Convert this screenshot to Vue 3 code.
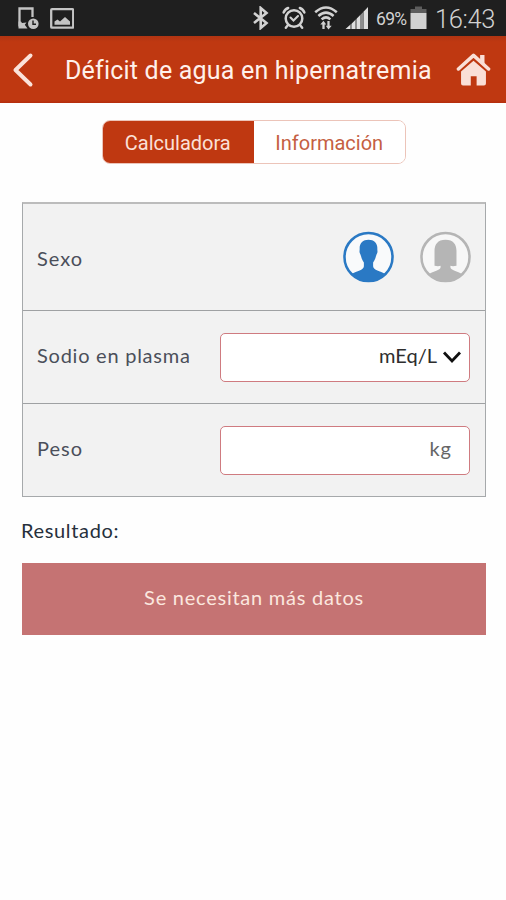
<script setup>
import { ref } from 'vue'

const tab = ref('calc')
const sex = ref('m')
</script>

<template>
  <div class="screen">
    <div class="status">
      <svg class="s-device" viewBox="0 0 22 23" width="22" height="23">
        <path d="M2.500 20.500V2.500H15.500V11" fill="none" stroke="#c4c4c4" stroke-width="2.300" />
        <path d="M1.500 15.500H4L5 17L9.500 16.500L7.800 18.800L10.500 22.500H1.500Z" fill="#c4c4c4" />
        <circle cx="16.300" cy="17.700" r="5.300" fill="#c4c4c4" />
        <path d="M16 14.500V18.200H19" fill="none" stroke="#1f1f1f" stroke-width="1.400" />
      </svg>
      <svg class="s-image" viewBox="0 0 24 21" width="24" height="21">
        <rect x="1.200" y="1.200" width="22" height="18.500" rx="0.800" fill="none" stroke="#c4c4c4" stroke-width="2.300" />
        <path d="M4.500 16.700V13.500L7.500 11.500L10 13.500L15 9L20 13.500V16.700Z" fill="#c4c4c4" />
      </svg>
      <svg class="s-bt" viewBox="0 0 18 24" width="18" height="24">
        <path d="M2 7L14.500 17L8.700 22V2L14.500 7L2 17" fill="none" stroke="#d2d2d2" stroke-width="2.600" />
      </svg>
      <svg class="s-alarm" viewBox="0 0 24 24" width="24" height="24">
        <g fill="none" stroke="#d2d2d2" stroke-linecap="round">
          <circle cx="12" cy="12.500" r="8.300" stroke-width="2.500" />
          <path d="M8.500 11.500L11.500 14.500L16 10" stroke-width="2.100" />
          <path d="M1.600 6.500Q2.800 3.200 6.200 2M22.400 6.500Q21.200 3.200 17.800 2M6 19L3.800 21.800M18 19L20.200 21.800" stroke-width="2.400" />
        </g>
      </svg>
      <svg class="s-wifi" viewBox="0 0 24 25" width="24" height="25">
        <g fill="none" stroke="#d2d2d2" stroke-width="2.500">
          <path d="M1.200 7.300Q12 -2.300 22.800 7.300M4.400 11Q12 4.200 19.600 11M7.600 14.400Q12 10.400 16.400 14.400" />
          <path d="M9.500 24V18M14.500 16V22" stroke-width="2.300" />
        </g>
        <path d="M6.300 19.500L9.500 15.700L12.200 19.500ZM11.800 20.700L14.500 24.500L17.700 20.700Z" fill="#d2d2d2" />
      </svg>
      <svg class="s-signal" viewBox="0 0 24 24" width="24" height="24">
        <path d="M0.500 23L5.500 18.500V23ZM7 17.200L10 14.300V23H7ZM12 12.300L15 9.300V23H12ZM18.500 5.700L23 1V23H18.500Z" fill="#dedede" />
        <path d="M5.500 18.500L7 17.200V23H5.500ZM10 14.300L12 12.300V23H10ZM15 9.300L18.500 5.700V23H15Z" fill="#8d8d8d" />
      </svg>
      <span class="pct">69%</span>
      <svg class="s-batt" viewBox="0 0 17 24" width="17" height="24">
        <path d="M5 0.500H12V3H16.500V7H0.500V3H5Z" fill="#5d5d5d" />
        <rect x="0.500" y="7" width="16" height="16" fill="#d2d2d2" />
      </svg>
      <span class="clock">16:43</span>
    </div>

    <header class="bar">
      <svg class="back" viewBox="0 0 22 36" width="22" height="36">
        <path d="M18.500 3.500L3.500 18L18.500 32.500" fill="none" stroke="#fbe3da" stroke-width="4" stroke-linecap="round" stroke-linejoin="round" />
      </svg>
      <h1>Déficit de agua en hipernatremia</h1>
      <svg class="home" viewBox="0 0 36 36" width="35" height="35">
        <path d="M2.500 17.500L18 3.500L33.500 17.500" fill="none" stroke="#fadfd7" stroke-width="3.600" stroke-linecap="round" stroke-linejoin="round" />
        <path d="M24.800 3H29.300V12.500L24.800 8.500Z" fill="#fadfd7" />
        <path d="M18 8.900L30.800 20V32.500Q30.800 34.500 28.800 34.500H21.200V25H15.200V34.500H7.200Q5.200 34.500 5.200 32.500V20Z" fill="#fadfd7" />
      </svg>
    </header>

    <nav class="tabs">
      <button :class="{ active: tab === 'calc' }" @click="tab = 'calc'">Calculadora</button>
      <button :class="{ active: tab === 'info' }" @click="tab = 'info'">Información</button>
    </nav>

    <section class="card">
      <div class="row row-sex">
        <span class="label l-sex">Sexo</span>
        <div class="avatars">
          <svg :class="['avatar', { on: sex === 'm' }]" viewBox="0 0 52 52" @click="sex = 'm'">
            <circle cx="26" cy="26" r="24.500" fill="#f9fafb" stroke="currentColor" stroke-width="2.600" />
            <path d="M26 8.300C31.800 8.300 35.300 12 35 17.500C34.900 19.500 35.500 20 34.900 22C34.400 23.500 33.800 24 33.500 25.500C33 28 31.800 30 30.700 31.500V35.500C31.200 39.800 37.500 39.800 43.500 43.500Q36 51.300 26 51.300Q16 51.300 8.500 43.500C14.500 39.800 20.800 39.800 21.300 35.500V31.500C20.200 30 19 28 18.500 25.500C18.200 24 17.600 23.500 17.100 22C16.500 20 17.100 19.500 17 17.500C16.700 12 20.200 8.300 26 8.300Z" fill="currentColor" />
          </svg>
          <svg :class="['avatar', { on: sex === 'f' }]" viewBox="0 0 52 52" @click="sex = 'f'">
            <circle cx="26" cy="26" r="24.500" fill="#f7f7f7" stroke="currentColor" stroke-width="2.600" />
            <path d="M26 8.300C34 8.300 37.200 13 37.200 20V34.800Q34 35.700 31 35V36.500C31.500 40 38 40.300 43.500 43.800Q36 51.300 26 51.300Q16 51.300 8.500 43.800C14 40.300 20.500 40 21 36.500V35Q18 35.700 14.800 34.800V20C14.800 13 18 8.300 26 8.300Z" fill="currentColor" />
          </svg>
        </div>
      </div>
      <div class="row row-na">
        <span class="label l-na">Sodio en plasma</span>
        <div class="field f-na">
          <span class="unit">mEq/L</span>
          <svg viewBox="0 0 20 14" width="20" height="14">
            <path d="M2 2.500L10 11L18 2.500" fill="none" stroke="#101010" stroke-width="2.800" />
          </svg>
        </div>
      </div>
      <div class="row row-kg">
        <span class="label l-kg">Peso</span>
        <div class="field f-kg"><span class="unit kg">kg</span></div>
      </div>
    </section>

    <div class="result-label">Resultado:</div>
    <div class="result"><span>Se necesitan más datos</span></div>
  </div>
</template>

<style>
body {
  background: #fff;
}
</style>

<style scoped>
.screen {
  width: 506px;
  height: 900px;
  overflow: hidden;
  background: #fefefe;
  font-family: Lato, sans-serif;
}
svg {
  display: block;
  flex: none;
}
.status {
  display: flex;
  align-items: flex-start;
  height: 36px;
  box-sizing: border-box;
  padding: 6px 0 0 17px;
  background: #1f1f1f;
  font-family: Roboto, sans-serif;
  color: #d2d2d2;
}
.s-image {
  margin: 2px 0 0 11px;
}
.s-bt {
  margin-left: 178px;
}
.s-alarm {
  margin-left: 12px;
}
.s-wifi {
  margin: -1px 0 0 8px;
}
.s-signal {
  margin-left: 7px;
}
.pct {
  width: 34px;
  margin-left: 7px;
  font-size: 17.5px;
  line-height: 26px;
  letter-spacing: -0.7px;
  white-space: nowrap;
}
.clock {
  margin-left: 8px;
  font-size: 25.5px;
  font-weight: 300;
  line-height: 26px;
  letter-spacing: -0.4px;
  white-space: nowrap;
}
.bar {
  display: flex;
  align-items: center;
  height: 67px;
  box-sizing: border-box;
  padding: 0 15px 0 12px;
  background: linear-gradient(#b03412, #bf3811 6px, #bf3811 64px, #b52d0d);
}
h1 {
  flex: 1;
  margin: 3px 0 0 31px;
  font: 400 25px/32px Roboto, sans-serif;
  letter-spacing: 0.2px;
  color: #fff1eb;
  white-space: nowrap;
}
.tabs {
  display: flex;
  width: 304px;
  height: 44px;
  box-sizing: border-box;
  margin: 17px 0 0 102px;
  border: 1px solid #ecc4b9;
  border-radius: 8px;
  overflow: hidden;
}
.tabs button {
  flex: 1;
  padding: 1px 0 0;
  border: 0;
  background: #fff;
  color: #c55f43;
  font: 400 20px/24px Roboto, sans-serif;
}
.tabs button.active {
  margin: -1px 0 -1px -1px;
  background: #bf3811;
  color: #fbe0d8;
}
.card {
  width: 464px;
  height: 295px;
  box-sizing: border-box;
  margin: 38px 20px 0 22px;
  border: 1px solid #a6a9ab;
  border-top: 2px solid #bcbcbc;
  background: #f2f2f2;
}
.row {
  display: flex;
  align-items: center;
  justify-content: space-between;
  box-sizing: border-box;
  padding: 0 15px 0 14px;
}
.row-sex {
  height: 107px;
  padding-right: 14px;
  border-bottom: 1px solid #9fa1a3;
}
.row-na {
  height: 93px;
  border-bottom: 1px solid #9fa1a3;
}
.row-kg {
  height: 92px;
}
.label {
  font-size: 20px;
  line-height: 26px;
  color: #4b4f5a;
  letter-spacing: 0.75px;
}
.l-sex {
  padding-top: 1px;
  letter-spacing: 1px;
}
.l-na {
  padding-bottom: 4px;
}
.l-kg {
  padding-bottom: 4px;
  letter-spacing: 1px;
}
.avatars {
  display: flex;
  gap: 26px;
}
.avatar {
  width: 52px;
  height: 52px;
  color: #b5b5b5;
}
.avatars .avatar {
  width: 51px;
}
.avatar.on {
  color: #2a79c4;
}
.field {
  display: flex;
  align-items: center;
  justify-content: flex-end;
  width: 250px;
  height: 49px;
  box-sizing: border-box;
  border: 1px solid #cf7b80;
  border-radius: 5px;
  background: #fff;
}
.f-na {
  gap: 5px;
  padding-right: 7px;
}
.f-kg {
  padding-right: 17px;
}
.unit {
  padding-bottom: 4px;
  font-size: 20px;
  line-height: 26px;
  color: #2e2e2e;
}
.unit.kg {
  color: #666;
  letter-spacing: 1px;
}
.result-label {
  margin: 20px 0 0 21px;
  font-size: 20px;
  line-height: 26px;
  letter-spacing: 0.65px;
  color: #26303c;
}
.result {
  display: flex;
  align-items: center;
  justify-content: center;
  width: 464px;
  height: 72px;
  box-sizing: border-box;
  padding-bottom: 4px;
  margin: 20px 0 0 22px;
  background: #c57373;
  color: #fbe7df;
  font-size: 20px;
  letter-spacing: 0.75px;
}
</style>
